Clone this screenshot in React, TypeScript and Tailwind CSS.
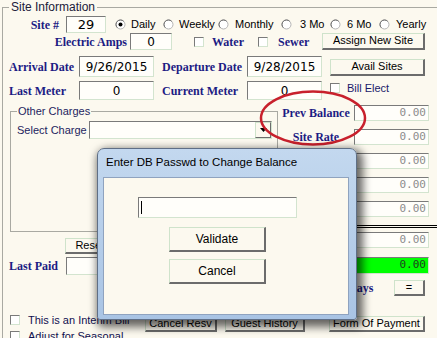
import React from "react";

const serifB =
  "font-['Liberation_Serif',serif] font-bold text-[12px] leading-[14px] text-[#1c1c84] whitespace-nowrap";

function Box({ className = "", children }: { className?: string; children?: React.ReactNode }) {
  return (
    <div
      className={`flex items-center shrink-0 bg-[#fffefa] border-t border-l border-t-[#7a7a7a] border-l-[#7a7a7a] border-r border-b border-r-[#d3e4cf] border-b-[#d3e4cf] ${className}`}
    >
      {children}
    </div>
  );
}

function Btn({ className = "", children }: { className?: string; children?: React.ReactNode }) {
  return (
    <div
      className={`flex items-center justify-center shrink-0 whitespace-nowrap bg-[#fcf9ef] border-t border-l border-t-[#cfe3cb] border-l-[#cfe3cb] border-r-2 border-b-2 border-r-[#6c6c6c] border-b-[#6c6c6c] leading-none text-black ${className}`}
    >
      {children}
    </div>
  );
}

function Check() {
  return (
    <div className="w-[10px] h-[10px] shrink-0 bg-white border-t border-l border-t-[#7a7a7a] border-l-[#7a7a7a] border-r border-b border-r-[#d3e4cf] border-b-[#d3e4cf]" />
  );
}

function Radio({ on }: { on?: boolean }) {
  return (
    <svg width="11" height="11" viewBox="0 0 11 11" className="shrink-0">
      <circle cx="5.5" cy="5.5" r="4.5" fill="#fff" stroke="#b4b4b4" />
      <path d="M2.3 8.7 A4.5 4.5 0 0 1 8.7 2.3" fill="none" stroke="#6a6a6a" />
      {on && <circle cx="5.5" cy="5.5" r="2" fill="#000" />}
    </svg>
  );
}

function ValRow({ label = "", className = "" }: { label?: string; className?: string }) {
  return (
    <div className={`flex items-center h-[16px] ${className}`}>
      <div className={`${serifB} w-[76px] text-center`}>{label}</div>
      <Box className="w-[75px] h-[16px] justify-end pr-[2px] font-['DejaVu_Sans_Mono',monospace] text-[11px] text-[#8c8c8c]">
        0.00
      </Box>
    </div>
  );
}

export default function App() {
  return (
    <div className="relative w-[437px] h-[338px] overflow-hidden bg-[#fcf9ef] font-['Liberation_Sans',Arial,sans-serif] text-[11px] text-black">
      {/* Site Information group */}
      <div className="ml-[2px] mt-[7px] w-[470px] h-[360px] border-t border-l border-[#a9a9a2]">
        <div className="-mt-[8px] ml-[6px] w-fit px-[2px] h-[14px] leading-[14px] bg-[#fcf9ef] text-[12px] text-[#20203a]">
          Site Information
        </div>

        {/* Row 1 */}
        <div className="mt-[2px] flex items-center h-[17px]">
          <div className={`${serifB} w-[56px] text-right`}>Site #</div>
          <Box className="ml-[7px] w-[40px] h-[17px] justify-center font-['DejaVu_Sans',sans-serif] text-[13px]">29</Box>
          <div className="ml-[9px] flex items-center w-[48px] gap-[5px]">
            <Radio on />
            <span>Daily</span>
          </div>
          <div className="flex items-center w-[55px] gap-[5px]">
            <Radio />
            <span>Weekly</span>
          </div>
          <div className="flex items-center w-[63px] gap-[6px]">
            <Radio />
            <span>Monthly</span>
          </div>
          <div className="flex items-center w-[49px] gap-[8px]">
            <Radio />
            <span>3 Mo</span>
          </div>
          <div className="flex items-center w-[49px] gap-[6px]">
            <Radio />
            <span>6 Mo</span>
          </div>
          <div className="flex items-center gap-[6px]">
            <Radio />
            <span>Yearly</span>
          </div>
        </div>

        {/* Row 2 */}
        <div className="flex items-center h-[17px]">
          <div className={`${serifB} w-[124px] text-right`}>Electric Amps</div>
          <Box className="ml-[3px] w-[42px] h-[17px] justify-center font-['DejaVu_Sans',sans-serif] text-[12px]">0</Box>
          <div className="ml-[22px] w-[64px] flex items-center gap-[8px]">
            <Check />
            <span className={serifB}>Water</span>
          </div>
          <div className="w-[64px] flex items-center gap-[10px]">
            <Check />
            <span className={serifB}>Sewer</span>
          </div>
          <Btn className="-mt-[1px] w-[103px] h-[17px]">Assign New Site</Btn>
        </div>

        {/* Row 3 */}
        <div className="mt-[6px] flex items-center h-[21px]">
          <div className={`${serifB} w-[76px] pl-[6px]`}>Arrival Date</div>
          <Box className="w-[75px] h-[21px] justify-center font-['DejaVu_Sans',sans-serif] text-[12px]">9/26/2015</Box>
          <div className={`${serifB} w-[93px] pl-[8px]`}>Departure Date</div>
          <Box className="w-[75px] h-[21px] justify-center font-['DejaVu_Sans',sans-serif] text-[12px]">9/28/2015</Box>
          <Btn className="ml-[8px] mt-[1px] w-[95px] h-[17px]">Avail Sites</Btn>
        </div>

        {/* Row 4 */}
        <div className="mt-[4px] flex items-start h-[19px]">
          <div className={`${serifB} w-[76px] pl-[6px] mt-[3px]`}>Last Meter</div>
          <Box className="w-[75px] h-[19px] justify-center font-['DejaVu_Sans',sans-serif] text-[12px]">0</Box>
          <div className={`${serifB} w-[93px] pl-[8px] mt-[3px]`}>Current Meter</div>
          <Box className="w-[75px] h-[19px] justify-center font-['DejaVu_Sans',sans-serif] text-[12px]">0</Box>
          <div className="ml-[8px] h-[14px] flex items-center gap-[7px]">
            <Check />
            <span className="text-[#1a1a6a]">Bill Elect</span>
          </div>
        </div>

        {/* Lower section */}
        <div className="flex h-[212px]">
          {/* Left column */}
          <div className="w-[275px] shrink-0">
            <div className="ml-[7px] mt-[11px] h-[121px] border border-[#a9a9a2]">
              <div className="-mt-[8px] ml-[6px] w-fit px-[1px] h-[14px] leading-[14px] bg-[#fcf9ef] text-[#1e1e60]">
                Other Charges
              </div>
              <div className="mt-[3px] flex items-center h-[18px]">
                <div className="ml-[6px] w-[72px] text-[#1e1e60] whitespace-nowrap">Select Charge</div>
                <Box className="w-[183px] h-[18px] justify-end">
                  <div className="w-[16px] h-[16px] flex items-center justify-center bg-[#fcf9ef] border-t border-l border-t-[#cfe3cb] border-l-[#cfe3cb] border-r border-b border-r-[#6c6c6c] border-b-[#6c6c6c]">
                    <svg width="7" height="4" viewBox="0 0 7 4">
                      <path d="M0 0 H7 L3.5 4 Z" fill="#000" />
                    </svg>
                  </div>
                </Box>
              </div>
            </div>
            <Btn className="mt-[6px] ml-[62px] w-[86px] h-[16px]">Reservations</Btn>
            <div className="mt-[3px] flex items-center h-[18px]">
              <div className={`${serifB} w-[63px] pl-[6px]`}>Last Paid</div>
              <Box className="w-[80px] h-[18px]" />
            </div>
          </div>

          {/* Right column */}
          <div className="flex-1 pt-[5px]">
            <ValRow label="Prev Balance" />
            <ValRow label="Site Rate" className="mt-[8px]" />
            <ValRow className="mt-[8px]" />
            <ValRow className="mt-[8px]" />
            <ValRow className="mt-[8px]" />
            <div className="mt-[8px] ml-[77px] h-[3px] w-[100px] border-t border-b border-black" />
            <ValRow className="mt-[4px]" />
            <div className="mt-[9px] flex items-center h-[17px]">
              <div className="w-[76px]" />
              <Box className="w-[75px] h-[17px] justify-end pr-[2px] !bg-[#00ff00] font-['DejaVu_Sans_Mono',monospace] text-[11px] text-[#1f3f1f]">
                0.00
              </Box>
            </div>
            <div className="mt-[6px] flex items-center h-[16px]">
              <div className="w-[70px]" />
              <div className={`${serifB} w-[46px]`}>Days</div>
              <Btn className="w-[31px] h-[16px]">=</Btn>
            </div>
          </div>
        </div>

        {/* Bottom */}
        <div className="flex items-start">
          <div className="w-[142px] shrink-0">
            <div className="h-[16px] ml-[7px] flex items-center gap-[8px]">
              <Check />
              <span className="text-[#101050] whitespace-nowrap">This is an Interim Bill</span>
            </div>
            <div className="h-[16px] ml-[7px] flex items-center gap-[8px]">
              <Check />
              <span className="text-[#101050] whitespace-nowrap">Adjust for Seasonal</span>
            </div>
          </div>
          <Btn className="mt-[4px] w-[72px] h-[16px]">Cancel Resv</Btn>
          <Btn className="mt-[4px] ml-[8px] w-[80px] h-[16px]">Guest History</Btn>
          <Btn className="mt-[4px] ml-[24px] w-[96px] h-[16px]">Form Of Payment</Btn>
        </div>
      </div>

      {/* Red annotation ellipse */}
      <svg
        className="absolute left-[258px] top-[89px] pointer-events-none"
        width="112"
        height="60"
        viewBox="0 0 112 60"
      >
        <ellipse cx="55" cy="29" rx="52" ry="26.5" fill="none" stroke="#c8202c" strokeWidth="2.5" />
      </svg>

      {/* Dialog */}
      <div className="absolute left-[97px] top-[148px] w-[260px] h-[172px] rounded-t-[7px] rounded-b-[3px] border border-[#5f6f86] bg-[linear-gradient(#c3d8ef,#a9c4e4)] shadow-[3px_4px_8px_3px_rgba(0,0,0,0.6)]">
        <div className="h-[28px] pl-[8px] flex items-center text-[11.5px] text-black whitespace-nowrap">
          Enter DB Passwd to Change Balance
        </div>
        <div className="ml-[5px] w-[246px] h-[138px] bg-[#fcf9ef] border border-[#8fa3bf]">
          <Box className="ml-[34px] mt-[19px] w-[159px] h-[21px]">
            <div className="ml-[2px] w-[1px] h-[13px] bg-black" />
          </Box>
          <Btn className="ml-[65px] mt-[9px] w-[97px] h-[25px] text-[12px]">Validate</Btn>
          <Btn className="ml-[65px] mt-[7px] w-[97px] h-[25px] text-[12px]">Cancel</Btn>
        </div>
      </div>
    </div>
  );
}
